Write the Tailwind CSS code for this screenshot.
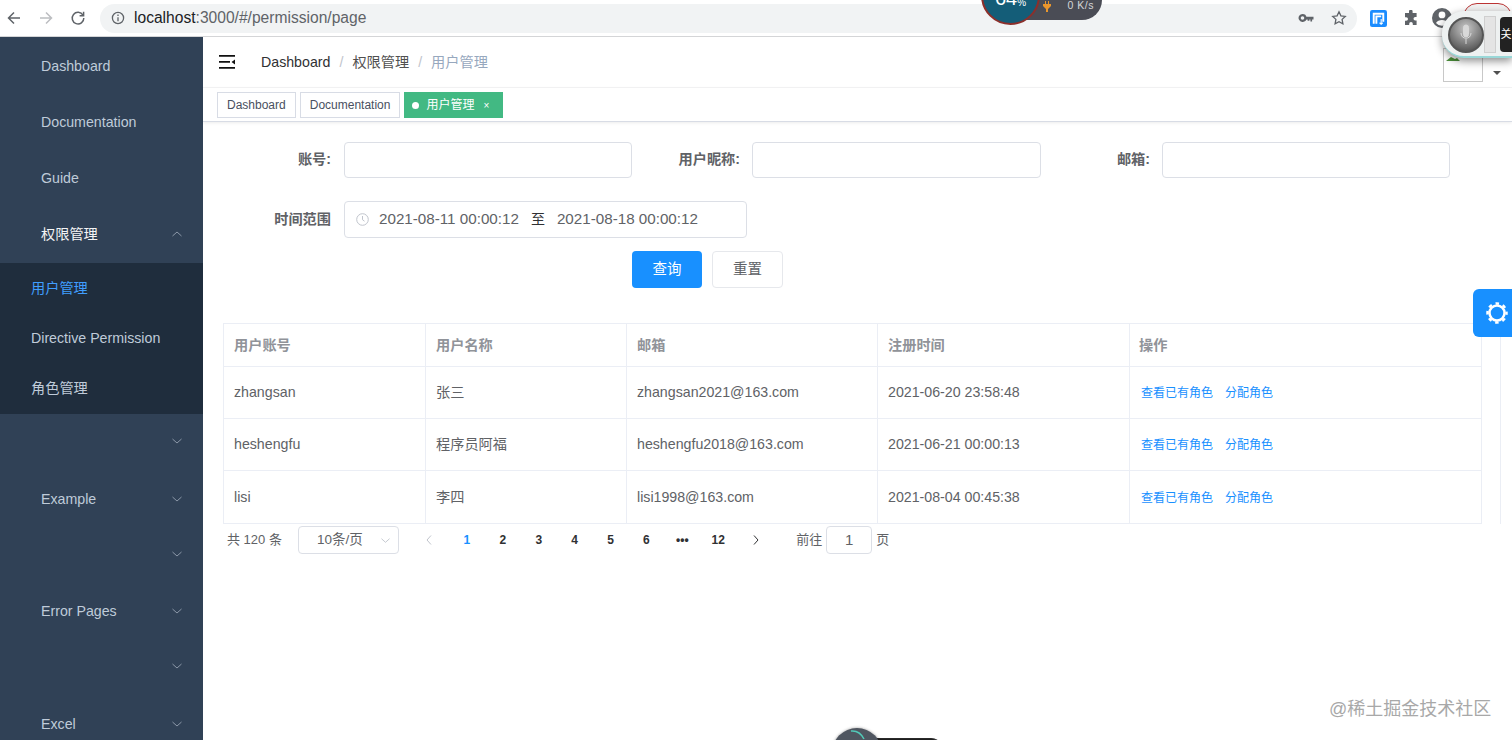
<!DOCTYPE html>
<html lang="zh-CN">
<head>
  <meta charset="UTF-8">
  <meta name="viewport" content="width=device-width, initial-scale=1.0">
  <title>用户管理</title>
  <script src="https://cdn.jsdelivr.net/npm/@tailwindcss/browser@4"></script>
</head>
<body class="relative h-[740px] w-[1512px] overflow-hidden bg-white font-['Liberation_Sans','Noto_Sans_CJK_SC',sans-serif] text-[#606266]">

  <!-- browser toolbar -->
  <div class="flex h-[37px] items-center border-b border-[#d4d5d7] bg-white">
    <div class="flex w-[100px] shrink-0 items-center">
      <svg class="ml-[6px] h-4 w-4 text-[#5f6368]" viewBox="0 0 16 16" fill="none" stroke="currentColor" stroke-width="1.5"><path d="M14 8H2.5M8 2.5 2.5 8 8 13.5"/></svg>
      <svg class="ml-[16px] h-4 w-4 text-[#bcbec1]" viewBox="0 0 16 16" fill="none" stroke="currentColor" stroke-width="1.5"><path d="M2 8h11.5M8 2.5 13.5 8 8 13.5"/></svg>
      <svg class="ml-[16px] h-4 w-4 text-[#5f6368]" viewBox="0 0 16 16" fill="none" stroke="currentColor" stroke-width="1.5"><path d="M13 5.2A5.8 5.8 0 1 0 13.8 8"/><path d="M13.6 1.8v4h-4" /></svg>
    </div>
    <div class="flex h-[29px] w-[1257px] items-center rounded-full bg-[#f1f3f4]">
      <svg class="ml-[11px] h-[14px] w-[14px] text-[#5f6368]" viewBox="0 0 14 14" fill="none" stroke="currentColor" stroke-width="1.3"><circle cx="7" cy="7" r="5.6"/><path d="M7 6.2v4M7 3.6v1.3"/></svg>
      <span class="ml-[9px] text-[15.600px] text-[#202124]">localhost<span class="text-[#5f6368]">:3000/#/permission/page</span></span>
      <svg class="ml-auto h-[14px] w-[16px] text-[#5f6368]" viewBox="0 0 16 14" fill="currentColor"><path d="M4.5 3a4 4 0 1 1-3.6 5.6A4 4 0 0 1 4.5 3Zm0 2.2a1.8 1.8 0 1 0 0 3.6 1.8 1.8 0 0 0 0-3.6Z"/><path d="M8 5.8h7.5v2.6h-1.4v2h-1.7v-2h-1v1.300H9.600V8.400H8Z"/></svg>
      <svg class="mr-[10px] ml-[17px] h-4 w-4 text-[#5f6368]" viewBox="0 0 16 16" fill="none" stroke="currentColor" stroke-width="1.3"><path d="m8 1.800 1.900 4 4.400.6-3.200 3 .8 4.400L8 11.700l-3.900 2.100.8-4.400-3.200-3 4.400-.6Z"/></svg>
    </div>
    <svg class="ml-[13px] h-[17px] w-[17px]" viewBox="0 0 16 16"><rect width="16" height="16" rx="2" fill="#1a8cff"/><path d="M3.500 13V3.500h9V11M6 13V6h4.500" fill="none" stroke="#fff" stroke-width="1.800"/><path d="M10.500 8.500v5M9 12l1.500 1.500L12 12" fill="none" stroke="#fff" stroke-width="1"/></svg>
    <svg class="ml-[16px] h-4 w-4 text-[#5f6368]" viewBox="0 0 16 16" fill="currentColor"><path d="M6 1.500a1.800 1.800 0 0 1 3.600 0V3h4v4h-1.300a1.800 1.800 0 0 0 0 3.600h1.300V15H9.800v-1.200a1.800 1.800 0 0 0-3.600 0V15H2v-4.200h1.200a1.800 1.800 0 0 0 0-3.600H2V3h4Z"/></svg>
    <svg class="ml-[13px] h-[20px] w-[20px] text-[#5f6368]" viewBox="0 0 20 20" fill="currentColor"><path d="M10 0a10 10 0 1 0 0 20 10 10 0 0 0 0-20Zm0 3.500a3.400 3.400 0 1 1 0 6.800 3.400 3.400 0 0 1 0-6.800Zm0 14.300a7.800 7.800 0 0 1-6-2.800c.8-1.900 3.700-3 6-3s5.200 1.100 6 3a7.800 7.800 0 0 1-6 2.800Z"/></svg>
  </div>

  <div class="flex h-[703px] overflow-hidden">
    <!-- sidebar -->
    <aside class="w-[203px] shrink-0 bg-[#304156] pt-[1px] text-[14.200px] text-[#bfcbd9]">
      <div class="flex h-[56.300px] items-center pl-[41px]">Dashboard</div>
      <div class="flex h-[56.300px] items-center pl-[41px]">Documentation</div>
      <div class="flex h-[56.300px] items-center pl-[41px]">Guide</div>
      <div class="flex h-[56.300px] items-center justify-between pr-[21px] pl-[41px] text-[#f4f4f5]">权限管理
        <svg class="mb-[2px] h-[10px] w-[10px] text-[#8b98a8]" viewBox="0 0 10 10" fill="none" stroke="currentColor"><path d="m.5 7 4.500-4 4.500 4"/></svg>
      </div>
      <div class="bg-[#1f2d3d]">
        <div class="flex h-[50.300px] items-center pl-[31px] text-[#409eff]">用户管理</div>
        <div class="flex h-[50.300px] items-center pl-[31px]">Directive Permission</div>
        <div class="flex h-[50.300px] items-center pl-[31px]">角色管理</div>
      </div>
      <div class="flex h-[56.300px] items-center justify-end pr-[21px]">
        <svg class="mb-[2px] h-[10px] w-[10px] text-[#8b98a8]" viewBox="0 0 10 10" fill="none" stroke="currentColor"><path d="m.5 3 4.500 4 4.500-4"/></svg>
      </div>
      <div class="flex h-[56.300px] items-center justify-between pt-[2px] pr-[21px] pl-[41px]">Example
        <svg class="mb-[2px] h-[10px] w-[10px] text-[#8b98a8]" viewBox="0 0 10 10" fill="none" stroke="currentColor"><path d="m.5 3 4.500 4 4.500-4"/></svg>
      </div>
      <div class="flex h-[56.300px] items-center justify-end pr-[21px]">
        <svg class="mb-[2px] h-[10px] w-[10px] text-[#8b98a8]" viewBox="0 0 10 10" fill="none" stroke="currentColor"><path d="m.5 3 4.500 4 4.500-4"/></svg>
      </div>
      <div class="flex h-[56.300px] items-center justify-between pt-[2px] pr-[21px] pl-[41px]">Error Pages
        <svg class="mb-[2px] h-[10px] w-[10px] text-[#8b98a8]" viewBox="0 0 10 10" fill="none" stroke="currentColor"><path d="m.5 3 4.500 4 4.500-4"/></svg>
      </div>
      <div class="flex h-[56.300px] items-center justify-end pr-[21px]">
        <svg class="mb-[2px] h-[10px] w-[10px] text-[#8b98a8]" viewBox="0 0 10 10" fill="none" stroke="currentColor"><path d="m.5 3 4.500 4 4.500-4"/></svg>
      </div>
      <div class="flex h-[56.300px] items-center justify-between pt-[2px] pr-[21px] pl-[41px]">Excel
        <svg class="mb-[2px] h-[10px] w-[10px] text-[#8b98a8]" viewBox="0 0 10 10" fill="none" stroke="currentColor"><path d="m.5 3 4.500 4 4.500-4"/></svg>
      </div>
    </aside>

    <main class="min-w-0 flex-1">
      <!-- navbar -->
      <div class="flex h-[51px] items-center border-b border-[#f4f4f5]">
        <svg class="ml-[16px] h-[16px] w-[17px] text-[#111]" viewBox="0 0 17 16" fill="currentColor"><path d="M0 1h16v1.800H0zM0 7h11v1.800H0zM0 13h16v1.800H0zM16 5.500v5L12.500 8z"/></svg>
        <nav class="ml-[25px] flex items-center pt-[1px] text-[14.200px]">
          <span class="text-[#303133]">Dashboard</span>
          <span class="mx-[9px] text-[#c0c4cc]">/</span>
          <span class="text-[#505050]">权限管理</span>
          <span class="mx-[9px] text-[#c0c4cc]">/</span>
          <span class="text-[#97a8be]">用户管理</span>
        </nav>
      </div>
      <!-- tags -->
      <div class="flex h-[34px] items-center gap-[4px] border-b border-[#d8dce5] pl-[14px] text-[12px] shadow-[0_1px_3px_rgba(0,0,0,0.08)]">
        <span class="flex h-[26px] items-center border border-[#d8dce5] pt-[1px] pr-[9px] pl-[9px] text-[#495060]">Dashboard</span>
        <span class="flex h-[26px] items-center border border-[#d8dce5] pt-[1px] px-[9px] text-[#495060]">Documentation</span>
        <span class="flex h-[26px] items-center bg-[#42b983] pt-[1px] pr-[14px] pl-[8px] text-white">
          <i class="mr-[7px] h-[7px] w-[7px] rounded-full bg-white"></i>用户管理<span class="ml-[9px] text-[10px]">×</span>
        </span>
      </div>

      <!-- filter form -->
      <form class="pt-[20px]">
        <div class="flex h-[36px] items-center">
          <label class="w-[128px] text-right text-[14.200px] font-bold">账号:</label>
          <div class="ml-[13px] h-[36px] w-[288px] rounded border border-[#dcdfe6]"></div>
          <label class="w-[108px] text-right text-[14.200px] font-bold">用户昵称:</label>
          <div class="ml-[12px] h-[36px] w-[289px] rounded border border-[#dcdfe6]"></div>
          <label class="w-[109px] text-right text-[14.200px] font-bold">邮箱:</label>
          <div class="ml-[12px] h-[36px] w-[288px] rounded border border-[#dcdfe6]"></div>
        </div>
        <div class="mt-[23px] flex h-[37px] items-center">
          <label class="w-[128px] text-right text-[14.200px] font-bold">时间范围</label>
          <div class="ml-[13px] flex h-[37px] w-[403px] items-center rounded border border-[#dcdfe6] text-[15.200px]">
            <svg class="ml-[11px] h-[13px] w-[13px] text-[#c0c4cc]" viewBox="0 0 13 13" fill="none" stroke="currentColor"><circle cx="6.500" cy="6.500" r="5.800"/><path d="M6.500 3v3.700l2 1.500"/></svg>
            <span class="ml-[10px]">2021-08-11 00:00:12</span>
            <span class="mr-[12px] ml-[12px] text-[14px] text-[#303133]">至</span>
            <span>2021-08-18 00:00:12</span>
          </div>
        </div>
        <div class="mt-[13px] flex h-[37px] gap-[10px] pl-[429px]">
          <button type="button" class="h-[37px] w-[70px] rounded bg-[#1890ff] text-[14.500px] text-white">查询</button>
          <button type="button" class="h-[37px] w-[71px] rounded border border-[#e6e8ec] text-[14.500px]">重置</button>
        </div>
      </form>

      <!-- table -->
      <div class="mt-[35px] ml-[20px] w-[1278px] border-r border-[#ebeef5]">
        <table class="w-[1258px] table-fixed border-collapse text-[14.200px]">
          <colgroup><col class="w-[202px]"><col class="w-[201px]"><col class="w-[251px]"><col class="w-[252px]"><col class="w-[352px]"></colgroup>
          <thead>
            <tr class="h-[43px] text-left font-bold text-[#909399]">
              <th class="border border-[#ebeef5] pt-[2px] pl-[10px]">用户账号</th>
              <th class="border border-[#ebeef5] pt-[2px] pl-[10px]">用户名称</th>
              <th class="border border-[#ebeef5] pt-[2px] pl-[10px]">邮箱</th>
              <th class="border border-[#ebeef5] pt-[2px] pl-[10px]">注册时间</th>
              <th class="border border-[#ebeef5] pt-[2px] pl-[9px]">操作</th>
            </tr>
          </thead>
          <tbody>
            <tr class="h-[52px]">
              <td class="border border-[#ebeef5] pl-[10px]">zhangsan</td>
              <td class="border border-[#ebeef5] pl-[10px]">张三</td>
              <td class="border border-[#ebeef5] pl-[10px]">zhangsan2021@163.com</td>
              <td class="border border-[#ebeef5] pl-[10px]">2021-06-20 23:58:48</td>
              <td class="border border-[#ebeef5] pl-[11px] text-[12px] text-[#1890ff]"><span>查看已有角色</span><span class="ml-[12px]">分配角色</span></td>
            </tr>
            <tr class="h-[52px]">
              <td class="border border-[#ebeef5] pl-[10px]">heshengfu</td>
              <td class="border border-[#ebeef5] pl-[10px]">程序员阿福</td>
              <td class="border border-[#ebeef5] pl-[10px]">heshengfu2018@163.com</td>
              <td class="border border-[#ebeef5] pl-[10px]">2021-06-21 00:00:13</td>
              <td class="border border-[#ebeef5] pl-[11px] text-[12px] text-[#1890ff]"><span>查看已有角色</span><span class="ml-[12px]">分配角色</span></td>
            </tr>
            <tr class="h-[53px]">
              <td class="border border-[#ebeef5] pt-[1px] pl-[10px]">lisi</td>
              <td class="border border-[#ebeef5] pt-[1px] pl-[10px]">李四</td>
              <td class="border border-[#ebeef5] pt-[1px] pl-[10px]">lisi1998@163.com</td>
              <td class="border border-[#ebeef5] pt-[1px] pl-[10px]">2021-08-04 00:45:38</td>
              <td class="border border-[#ebeef5] pt-[1px] pl-[11px] text-[12px] text-[#1890ff]"><span>查看已有角色</span><span class="ml-[12px]">分配角色</span></td>
            </tr>
          </tbody>
        </table>
      </div>

      <!-- pagination -->
      <div class="mt-[2px] ml-[24px] flex h-[28px] items-center text-[13px]">
        <span class="w-[71px]">共 120 条</span>
        <div class="flex h-[28px] w-[101px] items-center justify-between rounded border border-[#dcdfe6] pr-[8px] pl-[18px] text-[13.500px]">10条/页
          <svg class="h-[9px] w-[9px] text-[#c0c4cc]" viewBox="0 0 10 10" fill="none" stroke="currentColor"><path d="m.5 3 4.500 4 4.500-4"/></svg>
        </div>
        <div class="ml-[12px] flex items-center text-[12px] font-bold text-[#303133]">
          <span class="flex w-[38px] justify-center pr-[2px]"><svg class="h-[10px] w-[10px] text-[#c0c4cc]" viewBox="0 0 10 10" fill="none" stroke="currentColor"><path d="M7 .5 3 5l4 4.500"/></svg></span>
          <span class="w-[35.900px] text-center text-[#1890ff]">1</span>
          <span class="w-[35.900px] text-center">2</span>
          <span class="w-[35.900px] text-center">3</span>
          <span class="w-[35.900px] text-center">4</span>
          <span class="w-[35.900px] text-center">5</span>
          <span class="w-[35.900px] text-center">6</span>
          <span class="w-[35.900px] text-center">•••</span>
          <span class="w-[35.900px] text-center">12</span>
          <span class="flex w-[40px] justify-center"><svg class="h-[10px] w-[10px] text-[#303133]" viewBox="0 0 10 10" fill="none" stroke="currentColor"><path d="m3 .5 4 4.500-4 4.500"/></svg></span>
        </div>
        <span class="ml-[20px]">前往</span>
        <span class="ml-[4px] flex h-[28px] w-[46px] items-center justify-center rounded border border-[#dcdfe6] text-[15px]">1</span>
        <span class="ml-[4px]">页</span>
      </div>
    </main>
  </div>

  <!-- right settings tab -->
  <div class="absolute top-[289px] right-0 flex h-[48px] w-[39px] items-center justify-end rounded-l-md bg-[#1890ff] pr-[4px]">
    <svg class="h-[22px] w-[22px]" viewBox="0 0 22 22" fill="none" stroke="#fff"><circle cx="11" cy="11" r="7.500" stroke-width="2.500"/><circle cx="11" cy="11" r="9.500" stroke-width="2.500" stroke-dasharray="3.500 3.960" stroke-dashoffset="1.750"/></svg>
  </div>

  <!-- avatar with broken image -->
  <div class="absolute top-[48px] left-[1443px] h-[34px] w-[40px] border border-[#c8c8c8]"></div>
  <svg class="absolute top-[57px] left-[1446px] h-[4px] w-[14px]" viewBox="0 0 14 4" fill="#4b8f3a"><path d="M0 4 5 0l4 2 2-1 3 3z"/></svg>
  <svg class="absolute top-[70px] left-[1493px] h-[6px] w-[8px] text-[#505050]" viewBox="0 0 8 6" fill="currentColor"><path d="M0 1h8L4 5z"/></svg>

  <!-- desktop overlays: network meter -->
  <div class="absolute top-[-20px] left-[1010px] flex h-[40px] w-[92px] items-center justify-end rounded-r-[20px] bg-[#4a4c55] pt-[12px] pr-[8px] text-[10.500px] tracking-[0.5px] text-[#d5d6d8]">0 K/s</div>
  <svg class="absolute top-[1px] left-[1043px] h-[11px] w-[8px]" viewBox="0 0 8 11" fill="#e9962d"><path d="M2 0h1v3h2V0h1v3h2v2L5 8v3H3V8L0 5V3h2z"/></svg>
  <div class="absolute top-[-34px] left-[981px] flex h-[59px] w-[59px] items-end justify-center rounded-full border-2 border-[#8c2f2b] bg-[#145d78] pb-[15px] text-[20px] leading-none text-white">64<span class="text-[10px]">%</span></div>

  <!-- desktop overlays: voice widget -->
  <div class="absolute top-[3px] left-[1463px] h-[40px] w-[49px] rounded-t-[14px] border border-[#b33] bg-[#f1f1f1]"></div>
  <div class="absolute top-[11px] left-[1442px] h-[47px] w-[70px] rounded-l-[22px] border-b-2 border-[#9ad8d8] bg-[#eef1f1] shadow-[0_3px_8px_rgba(0,0,0,0.45)]"></div>
  <div class="absolute top-[16px] left-[1484px] h-[37px] w-[12px] border border-[#cfcfcf] bg-[#e4e4e4]"></div>
  <div class="absolute top-[17px] left-[1500px] flex h-[35px] w-[12px] items-center justify-center overflow-hidden rounded-l bg-[#222] text-[11px] text-white">关</div>
  <div class="absolute top-[17px] left-[1448px] flex h-[36px] w-[36px] items-center justify-center rounded-full border-2 border-[#555] bg-[radial-gradient(circle_at_50%_30%,#c8c8c8,#3e3e3e)]">
    <svg class="h-[22px] w-[14px]" viewBox="0 0 14 22" fill="none" stroke="#d8d8d8"><rect x="4.500" y="1" width="5" height="12" rx="2.500" fill="#d8d8d8"/><path d="M2 9c0 7 10 7 10 0M7 15v5"/></svg>
  </div>

  <!-- watermark -->
  <div class="absolute top-[696px] left-[1329px] text-[18px] text-[#a8a8a8]">@稀土掘金技术社区</div>

  <!-- bottom floating widget, mostly off-screen -->
  <div class="absolute top-[738px] left-[855px] h-[24px] w-[88px] rounded-[12px] border-t border-[#2a2a2a] bg-[#1f1f1f]"></div>
  <div class="absolute top-[728px] left-[832px] h-[50px] w-[50px] rounded-full bg-[#4f5660] shadow-[0_0_3px_rgba(0,0,0,0.4)]"></div>
  <svg class="absolute top-[730px] left-[850px] h-[10px] w-[16px]" viewBox="0 0 16 10" fill="none" stroke="#52c9b8" stroke-width="1.500"><path d="M1 1c5-.5 10 2 13 8"/></svg>
</body>
</html>
